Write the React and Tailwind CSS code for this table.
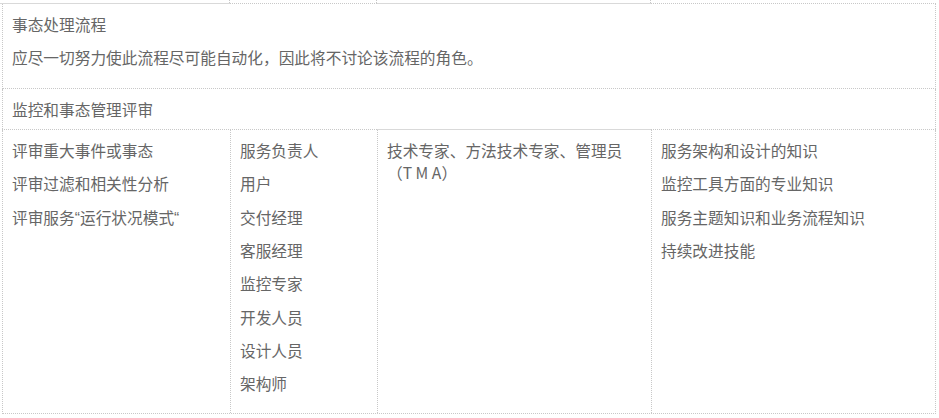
const Q = ({ children }) => (
  <span style={{ fontFamily: '"Liberation Sans", sans-serif' }}>{children}</span>
);

const col1 = ['评审重大事件或事态', '评审过滤和相关性分析', <>评审服务<Q>“</Q>运行状况模式<Q>“</Q></>];
const col2 = ['服务负责人', '用户', '交付经理', '客服经理', '监控专家', '开发人员', '设计人员', '架构师'];
const col3 = ['技术专家、方法技术专家、管理员（T M A）'];
const col4 = ['服务架构和设计的知识', '监控工具方面的专业知识', '服务主题知识和业务流程知识', '持续改进技能'];

function Cell({ items, className = '' }) {
  return (
    <div className={`pt-[10px] pb-[6px] px-[9px] ${className}`}>
      {items.map((t, i) => (
        <p key={i} className="leading-[22px] mb-[11.33px]">{t}</p>
      ))}
    </div>
  );
}

export default function App() {
  return (
    <div
      className="w-[939px] h-[418px] bg-white text-[15.7px] text-[#666] overflow-hidden"
      style={{ fontFamily: '"Noto Sans CJK SC", "Noto Sans", sans-serif' }}
    >
      <div className="pl-[2px] w-[936px]">
        {/* tail of previous row */}
        <div className="grid grid-cols-[228px_147px_274px_1fr] h-[3px]">
          <div className="border-r border-dotted border-[#c8c8c8]" />
          <div className="border-r border-dotted border-[#c8c8c8]" />
          <div className="border-r border-dotted border-[#c8c8c8]" />
          <div />
        </div>
        <div className="flex h-px">
          <div className="w-[228px] bg-[#d9d9d9] -ml-[2px] pl-[2px] box-content" />
          <div className="w-[147px] border-t border-dotted border-[#c8c8c8]" />
          <div className="w-[274px] bg-[#d9d9d9]" />
          <div className="flex-1 border-t border-dotted border-[#c8c8c8]" />
        </div>

        {/* row 1 */}
        <div className="border-x border-b border-dotted border-[#c8c8c8] pt-[10px] pb-[8px] px-[9px]">
          <p className="leading-[22px] mb-[11px]">事态处理流程</p>
          <p className="leading-[22px] mb-[11px]">应尽一切努力使此流程尽可能自动化，因此将不讨论该流程的角色。</p>
        </div>

        {/* row 2 */}
        <div className="border-x border-dotted border-[#c8c8c8] pt-[10px] pb-[8px] px-[9px]">
          <p className="leading-[22px]">监控和事态管理评审</p>
        </div>
        <div className="flex h-px">
          <div className="w-[375px] border-t border-dotted border-[#c8c8c8]" />
          <div className="w-[274px] bg-[#d9d9d9]" />
          <div className="flex-1 border-t border-dotted border-[#c8c8c8]" />
        </div>

        {/* row 3 */}
        <div className="grid grid-cols-[228px_147px_274px_1fr] h-[284px] border-x border-b border-dotted border-[#c8c8c8]">
          <Cell items={col1} className="border-r border-dotted border-[#c8c8c8]" />
          <Cell items={col2} className="border-r border-dotted border-[#c8c8c8]" />
          <Cell items={col3} className="border-r border-dotted border-[#c8c8c8]" />
          <Cell items={col4} />
        </div>
      </div>
    </div>
  );
}
